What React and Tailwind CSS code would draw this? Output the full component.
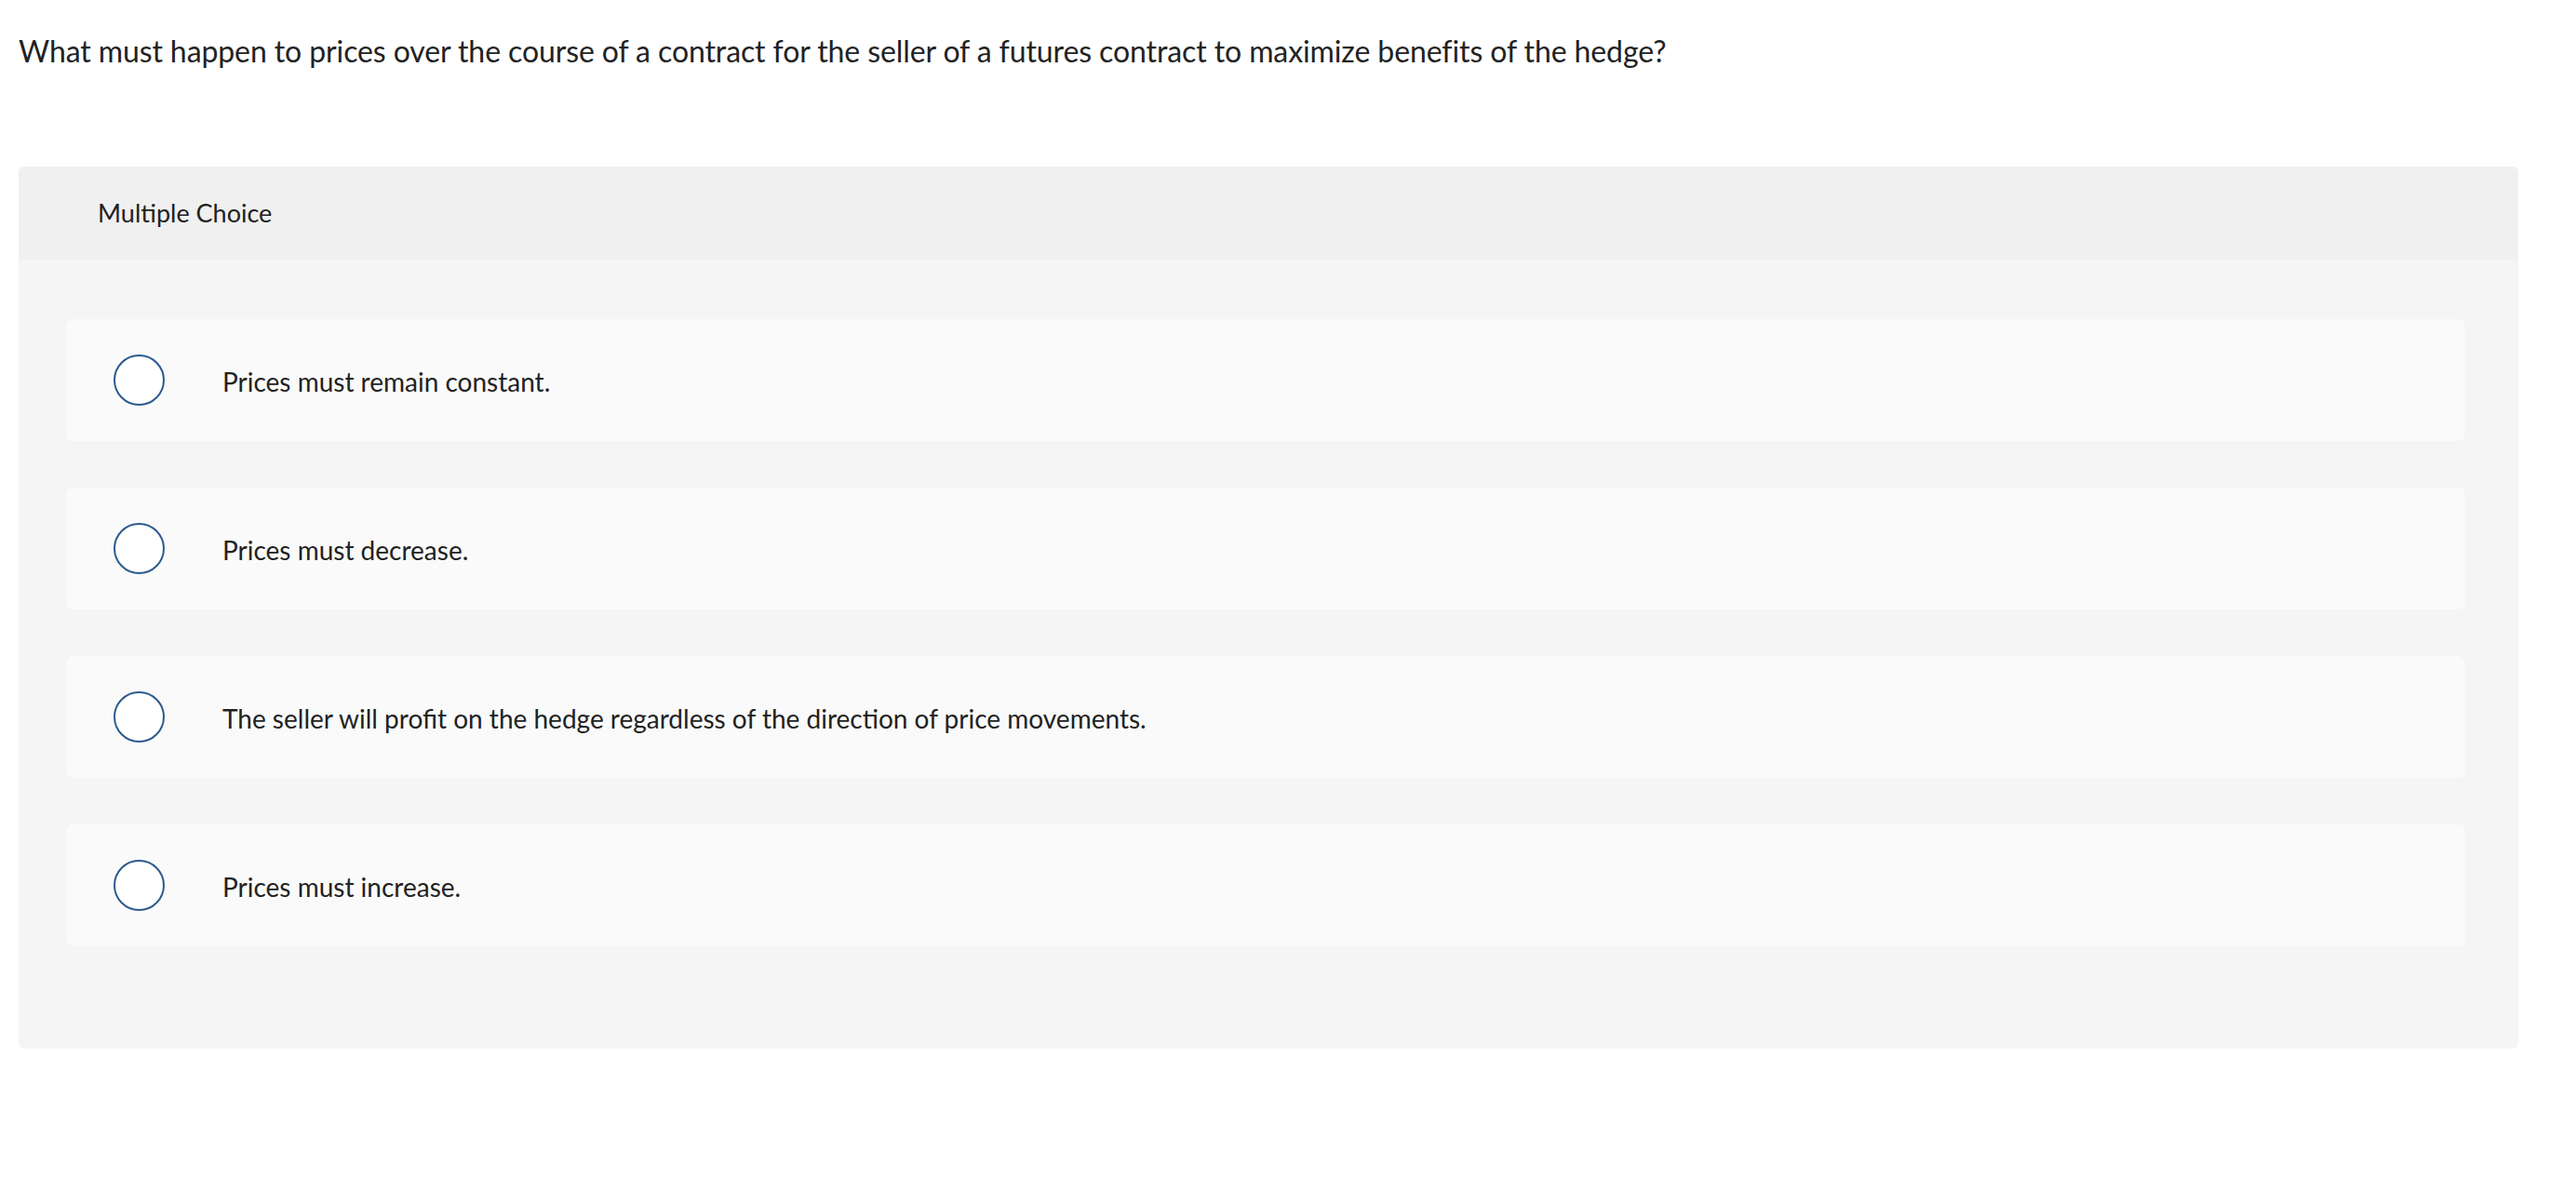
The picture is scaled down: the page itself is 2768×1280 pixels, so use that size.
import React from "react";

const options = [
  "Prices must remain constant.",
  "Prices must decrease.",
  "The seller will profit on the hedge regardless of the direction of price movements.",
  "Prices must increase.",
];

export default function App() {
  return (
    <div
      className="min-h-screen bg-white text-[#222222]"
      style={{ fontFamily: "Lato, 'Open Sans', sans-serif" }}
    >
      <div className="px-5 pt-[34px]">
        <p className="text-[32px] leading-[42px] tracking-[-0.1px]">
          What must happen to prices over the course of a contract for the seller of a futures contract to maximize benefits of the hedge?
        </p>
      </div>

      <div className="ml-5 mt-[103px] w-[2686px] rounded-[6px] bg-[#f5f5f5] pb-[110px]">
        <div className="flex h-[100px] items-center rounded-t-[6px] bg-[#f0f0f0] pl-[85px] text-[27px]">
          Multiple Choice
        </div>

        <div className="flex flex-col gap-[50px] pl-[51px] pr-[57px] pt-[64px]">
          {options.map((opt) => (
            <div
              key={opt}
              className="flex h-[131px] items-center rounded-[8px] bg-[#fafafa]"
            >
              <div className="ml-[51px] h-[55px] w-[55px] shrink-0 rounded-full border-2 border-[#2c5a8e] bg-white" />
              <span className="ml-[62px] pt-[2px] text-[28px]">{opt}</span>
            </div>
          ))}
        </div>
      </div>
    </div>
  );
}
